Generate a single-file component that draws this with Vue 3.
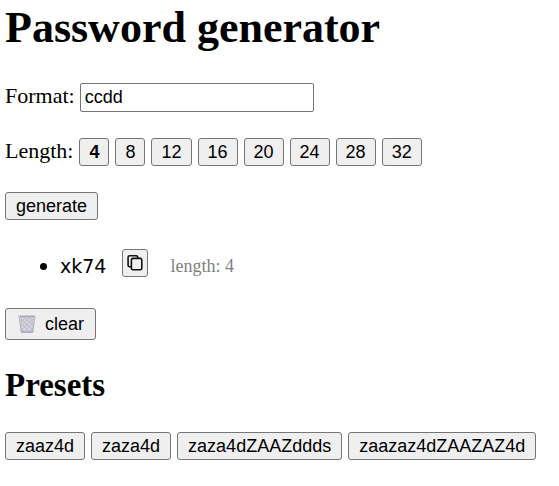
<script setup>
import { ref } from 'vue'

const format = ref('ccdd')
const length = ref(4)
const lengths = [4, 8, 12, 16, 20, 24, 28, 32]
const passwords = ref(['xk74'])
const presets = ['zaaz4d', 'zaza4d', 'zaza4dZAAZddds', 'zaazaz4dZAAZAZ4d']

const sets = {
  c: 'bcdfghjklmnpqrstvwxyz',
  d: '0123456789',
  a: 'aeiou',
  z: 'bcdfghjklmnpqrstvwxz',
  A: 'AEIOU',
  Z: 'BCDFGHJKLMNPQRSTVWXZ',
  s: '!@#$%&*?',
}

function generate() {
  const result = [...format.value]
    .map((key) => {
      const set = sets[key]
      return set ? set[Math.floor(Math.random() * set.length)] : key
    })
    .join('')
  passwords.value.unshift(result)
}

function setLength(n) {
  length.value = n
  format.value = 'ccdd'.repeat(n / 4)
}

function copy(text) {
  navigator.clipboard?.writeText(text)
}
</script>

<template>
  <main class="page">
    <h1>Password generator</h1>

    <div class="row">
      <label for="format">Format:</label>
      <input id="format" v-model="format" type="text" />
    </div>

    <div class="row lengths" role="group" aria-labelledby="length-label">
      <span id="length-label">Length:</span>
      <button
        v-for="n in lengths"
        :key="n"
        type="button"
        :class="{ active: n === length }"
        @click="setLength(n)"
      >{{ n }}</button>
    </div>

    <div class="row">
      <button type="button" @click="generate">generate</button>
    </div>

    <ul>
      <li v-for="(password, i) in passwords" :key="i">
        <div class="result">
          <code>{{ password }}</code>
          <button type="button" class="copy" aria-label="Copy" @click="copy(password)">
            <svg width="18" height="18" viewBox="0 0 18 18" fill="none" stroke="#111" stroke-width="1.6" stroke-linejoin="round">
              <path d="M5.2 12.7H3.6a1.5 1.5 0 0 1-1.5-1.5V3.2a1.5 1.5 0 0 1 1.5-1.5h6.6a1.5 1.5 0 0 1 1.5 1.5v1" />
              <rect x="5.4" y="4.4" width="10.4" height="11.4" rx="1.5" />
            </svg>
          </button>
          <small>length: {{ password.length }}</small>
        </div>
      </li>
    </ul>

    <div class="row">
      <button type="button" class="clear" @click="passwords = []">
        <svg width="20" height="20" viewBox="0 0 20 20" aria-hidden="true">
          <path d="M2 2.4h16l-2 15.8q-6 1.6-12 0z" fill="#d6d6df" />
          <path d="M4 5l11.6 11M8 4l8 7.5M12 4l4.5 4M3.5 9l8.5 8.5M4 14l3.5 3.5M16 5L4.4 16M12 4L4 11.5M8 4L3.5 8M16.5 9L8 17.5M16 14l-3.5 3.5" stroke="#b4b3c0" stroke-width=".9" />
          <path d="M2.4 3.6L4.2 18M17.6 3.6L15.8 18" stroke="#b4b3c0" stroke-width="1.1" />
          <path d="M4 17.6q6 1.4 12 0" fill="none" stroke="#aaa9b7" stroke-width="1.6" />
          <rect x="1.2" y="1.2" width="17.6" height="2.8" rx="1.2" fill="#c4c3cf" />
          <path d="M3 2.4h14" stroke="#9f9eac" stroke-width=".8" />
        </svg>
        <span>clear</span>
      </button>
    </div>

    <h2>Presets</h2>

    <div class="row presets">
      <button
        v-for="preset in presets"
        :key="preset"
        type="button"
        @click="format = preset"
      >{{ preset }}</button>
    </div>
  </main>
</template>

<style>
body {
  margin: 0;
  background: #fff;
}
</style>

<style scoped>
.page {
  padding: 2px 5px;
  color: #000;
  font: 22px/26px "Liberation Serif", "Times New Roman", serif;
}

h1 {
  margin: 0 0 30px;
  font-size: 44px;
  line-height: 51px;
}

h2 {
  margin: 26px 0 28px;
  font-size: 33px;
  line-height: 38px;
}

.row {
  display: flex;
  flex-wrap: wrap;
  align-items: baseline;
  gap: 5px;
  margin-bottom: 26px;
}

.presets {
  gap: 6px;
  margin-bottom: 0;
}

input,
button {
  box-sizing: border-box;
  height: 28px;
  border: 1px solid #767676;
  color: #000;
  font: 18px/24px "Liberation Sans", Arial, sans-serif;
}

input {
  width: 234px;
  height: 29px;
  padding: 0 4px;
  border-radius: 2px;
  background: #fff;
}

button {
  padding: 0 10px;
  border-radius: 3px;
  background: #efefef;
}

.lengths {
  gap: 6px;
}

.lengths button {
  padding: 0 9px;
}

.active {
  font-weight: bold;
}

ul {
  margin: 29px 0;
  padding-left: 55px;
}

.result {
  display: inline-flex;
  align-items: flex-end;
}

code {
  font: 19px/22px "DejaVu Sans", Verdana, sans-serif;
}

.copy {
  display: flex;
  align-items: center;
  justify-content: center;
  width: 26px;
  padding: 0;
  margin: 0 22px 0 16px;
}

small {
  color: #808080;
  font-size: 18px;
  line-height: 22px;
}

.clear {
  display: flex;
  align-items: center;
  gap: 8px;
  height: 32px;
  padding: 0 11px;
}
</style>
